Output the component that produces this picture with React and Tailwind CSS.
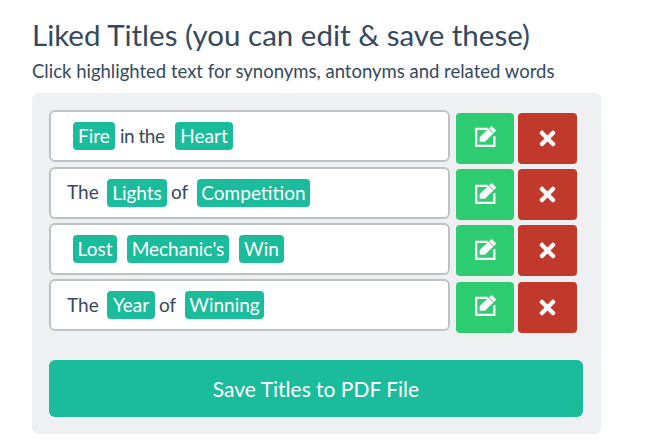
import React from "react";
import { FaTimes } from "react-icons/fa";

const EditIcon = () => (
  <svg className="-mt-[3px]" width="23" height="23" viewBox="0 0 21 21" fill="none" aria-hidden="true">
    <path d="M12.5 3.6H2v15.4h16.6V10" stroke="white" strokeWidth="2" />
    <path d="M16 .8 20.4 5 10 15.2H5.2V10.9Z" fill="white" />
    <path d="M13.6 3.4 17.8 7.4" stroke="#2ecc71" strokeWidth=".9" />
  </svg>
);

const rows = [
  { pad: "pl-[22px]", parts: [["t", "Fire", "w-[42px] mr-[5px]"], ["w", "in the", "w-[45px] mr-[10px] tracking-[-0.5px]"], ["t", "Heart", "w-[58px]"]] },
  { pad: "pl-[16px]", parts: [["w", "The", "w-[30px] mr-[10px]"], ["t", "Lights", "w-[60px] mr-[4px]"], ["w", "of", "w-[16px] mr-[10px]"], ["t", "Competition", "w-[113px]"]] },
  { pad: "pl-[22px]", parts: [["t", "Lost", "w-[44px] mr-[10px]"], ["t", "Mechanic's", "w-[102px] mr-[10px]"], ["t", "Win", "w-[45px]"]] },
  { pad: "pl-[16px]", parts: [["w", "The", "w-[30px] mr-[10px]"], ["t", "Year", "w-[48px] mr-[4px]"], ["w", "of", "w-[16px] mr-[10px]"], ["t", "Winning", "w-[79px]"]] },
];

export default function App() {
  return (
    <div className="h-[447px] w-[647px] overflow-hidden bg-white pl-[32px] pt-[17px] text-[#34495e] [font-family:Lato,sans-serif]">
      <h1 className="text-[29.5px] leading-[36px] font-normal">Liked Titles (you can edit &amp; save these)</h1>
      <p className="mt-[5px] text-[18.5px] leading-[26px]">Click highlighted text for synonyms, antonyms and related words</p>
      <div className="mt-[9px] h-[341px] w-[569px] rounded-[6px] bg-[#eff0f2] pl-[17px] pt-[17.3px]">
        <div className="flex flex-col gap-[4.4px]">
          {rows.map((r, i) => (
            <div key={i} className="flex h-[52px] items-start">
              <div className={`flex h-[52px] w-[401px] items-center rounded-[6px] border-[2px] border-[#bdc3c7] bg-white text-[19px] ${r.pad}`}>
                {r.parts.map(([k, s, c], j) =>
                  k === "t" ? (
                    <span key={j} className={`inline-block h-[28px] rounded-[4px] bg-[#1abc9c] text-center leading-[28px] whitespace-nowrap text-white ${c}`}>{s}</span>
                  ) : (
                    <span key={j} className={`whitespace-nowrap ${c}`}>{s}</span>
                  )
                )}
              </div>
              <div className="mt-[2.4px] ml-[6px] flex h-[51px] w-[58px] items-center justify-center rounded-[4px] bg-[#2ecc71] text-white">
                <EditIcon />
              </div>
              <div className="mt-[2.4px] ml-[4px] flex h-[51px] w-[59px] items-center justify-center rounded-[4px] bg-[#c0392b] text-white">
                <FaTimes size={23} />
              </div>
            </div>
          ))}
        </div>
        <button className="mt-[29px] block h-[57px] w-[534px] rounded-[6px] bg-[#1abc9c] text-center text-[21px] text-white">Save Titles to PDF File</button>
      </div>
    </div>
  );
}
